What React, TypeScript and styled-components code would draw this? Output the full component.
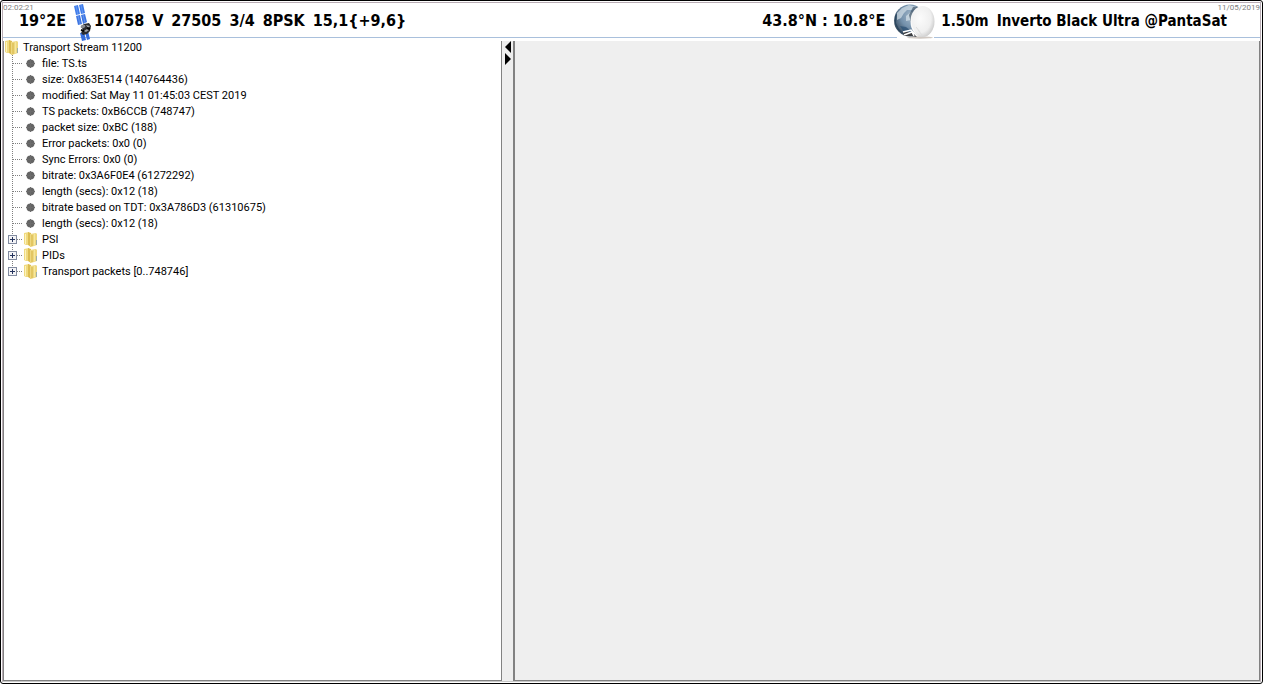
import React from "react";
import styled, { createGlobalStyle } from "styled-components";

const GlobalStyle = createGlobalStyle`
  * { box-sizing: border-box; }
  body { margin: 0; background: #fff; }
  button { font: inherit; padding: 0; border: 0; background: none; }
`;

const Frame = styled.div`
  height: 100vh;
  padding: 1px;
  background: #fff;
  border: 1px solid #000;
  border-radius: 3px;
`;

const Inner = styled.div`
  display: flex;
  flex-direction: column;
  height: 100%;
  border: 1px solid #b9adb5;
  border-bottom-color: #c8c8c8;
`;

const Header = styled.header`
  position: relative;
  display: flex;
  justify-content: space-between;
  align-items: center;
  flex: none;
  height: 35px;
  padding: 0 33px 0 16px;
  border-bottom: 1px solid #a9c0dc;
  color: #000;
  white-space: nowrap;
`;

const HeaderGroup = styled.div`
  display: flex;
  align-items: center;
  gap: 8px;
  height: 35px;
`;

const HeaderText = styled.span<{ $small?: boolean }>`
  padding-top: 2px;
  font: bold ${(p) => (p.$small ? 15 : 16)}px/20px "DejaVu Sans Condensed", "Noto Sans", sans-serif;
`;

const Stamp = styled.time<{ $side: "left" | "right" }>`
  position: absolute;
  top: 0;
  ${(p) => p.$side}: 0;
  color: #808080;
  font: 8px/9px Roboto, "Noto Sans", sans-serif;
`;

const SatelliteSvg = styled.svg`
  position: relative;
  z-index: 1;
  width: 20px;
  height: 38px;
  margin: 2px -6px -4px -2px;
`;

const DishSvg = styled.svg`
  position: relative;
  z-index: 1;
  width: 42px;
  height: 35px;
  margin: 2px -2px 0 0;
`;

const Split = styled.main`
  display: flex;
  flex: 1;
  min-height: 0;
  padding: 3px 0 0;
`;

const TreePane = styled.section`
  flex: 0 0 499px;
  border-right: 1px solid #828282;
  border-bottom: 1px solid #828282;
  border-left: 1px solid #828282;
`;

const Divider = styled.div`
  display: flex;
  flex-direction: column;
  flex: 0 0 11px;
  align-items: flex-end;
  padding-right: 1px;
  background: #eee;
`;

const DividerButton = styled.button`
  display: block;
  width: 7px;
  height: 12px;
  svg { display: block; }
`;

const DetailPane = styled.section`
  flex: 1;
  border: solid #828282;
  border-width: 0 1px 1px 2px;
  background: #efefef;
`;

const Tree = styled.ul`
  margin: 0;
  padding: 0;
  list-style: none;
  color: #000;
  font: 11px/14px Roboto, "Noto Sans", sans-serif;
  white-space: nowrap;
`;

const Row = styled.div`
  display: flex;
  align-items: center;
  height: 16px;
  margin-top: -2px;
  padding-left: 1px;
  gap: 4px;
`;

const Branches = styled.ul`
  margin: 0;
  padding: 0;
  list-style: none;
`;

const Branch = styled.li`
  display: flex;
  align-items: center;
  height: 16px;
`;

const Label = styled.span`
  padding-top: 2px;
`;

const Guide = styled.span`
  position: relative;
  display: flex;
  align-items: center;
  flex: none;
  width: 20px;
  height: 16px;
  svg { display: block; }
`;

const Toggle = styled.button`
  position: absolute;
  top: 4px;
  left: 4px;
  width: 9px;
  height: 9px;
`;

const Marker = styled.span`
  flex: none;
  width: 18px;
  svg { display: block; }
`;

function GuideLines({ last }: { last?: boolean }) {
  return (
    <svg width="20" height="16" shapeRendering="crispEdges" stroke="#808080" strokeDasharray="1 1">
      <line x1="8.5" y1="0" x2="8.5" y2={last ? 9 : 16} />
      <line x1="9" y1="8.5" x2="19" y2="8.5" />
    </svg>
  );
}

function Plus() {
  return (
    <svg width="9" height="9" shapeRendering="crispEdges">
      <rect x="0.5" y="0.5" width="8" height="8" fill="#f4f4f6" stroke="#828ba0" />
      <path d="M2 4.5h5M4.5 2v5" stroke="#25345e" />
    </svg>
  );
}

function Folder() {
  return (
    <svg width="14" height="16" viewBox="0 0 14 16">
      <path d="M0 2l5-1v13l-3 0-2-1z" fill="#f0da80" />
      <path d="M4 1l3 1v14l-3-2z" fill="#dcbc50" />
      <path d="M6 3l6-1 1 1v11l-6 2-1-1z" fill="#eed880" />
      <path d="M1 3h1v10H1z" fill="#fbf3bf" />
      <path d="M7 4h2v11H7z" fill="#e2c662" />
      <path d="M10 3h1v11h-1z" fill="#f6e89c" />
      <path d="M12 9h1v5h-1z" fill="#9fb0a8" />
    </svg>
  );
}

function Dot() {
  return (
    <svg width="14" height="16" viewBox="0 0 14 16">
      <circle cx="6.5" cy="8.5" r="4" fill="#646464" />
      <path d="M2 8h9v1H2zM6 4h1v9H6z" fill="#6c6c6c" />
    </svg>
  );
}

function Satellite() {
  return (
    <SatelliteSvg viewBox="0 0 20 38" aria-hidden="true">
      <path d="M2 2l4-1 2 9-4 1zM7 1l4-1 2 9-4 1z" fill="#3f7bea" />
      <path d="M4 12l4-1 2 9-4 1zM9 11l4-1 2 8-4 2z" fill="#3d75e2" />
      <path d="M4 2l2 9M9 1l2 9M6 12l2 8M11 11l2 8" stroke="#7ea9f4" strokeWidth="0.6" fill="none" />
      <path d="M8 29l4-1 2 8-4 1zM13 28l3-1 2 8-3 1z" fill="#356ddd" />
      <path d="M9 22l3-2 5-1 2 3-1 5-3 3-4 1-2-2 2-3z" fill="#2c2d31" />
      <ellipse cx="11" cy="22.5" rx="2.5" ry="1.6" fill="#8b8d92" transform="rotate(-20 11 22.5)" />
      <path d="M14 21l4 1-2 2zM12 27l3-2 2 1-3 2z" fill="#a3a5aa" />
      <path d="M15 24l3 1M9 26l3 1" stroke="#050505" strokeWidth="2" />
    </SatelliteSvg>
  );
}

function Dish() {
  return (
    <DishSvg viewBox="0 0 42 35" aria-hidden="true">
      <defs>
        <radialGradient id="globe" cx="60%" cy="35%" r="65%">
          <stop offset="0" stopColor="#a8bccd" />
          <stop offset="0.6" stopColor="#7390ab" />
          <stop offset="1" stopColor="#3d5063" />
        </radialGradient>
        <radialGradient id="dish" cx="40%" cy="40%" r="65%">
          <stop offset="0" stopColor="#fbfbfb" />
          <stop offset="0.7" stopColor="#efefef" />
          <stop offset="1" stopColor="#cbcbcb" />
        </radialGradient>
      </defs>
      <path d="M4 30h37v5H4z" fill="#fff" />
      <ellipse cx="27" cy="33.5" rx="13" ry="1.2" fill="#cfc8c2" />
      <circle cx="17" cy="16.5" r="16" fill="url(#globe)" />
      <path d="M4 9l5-5 7-3 8 2-5 3-5 0-3 3-3 5-4 2zM13 12l5-4 3 2-3 6-5 1z" fill="#dce6ec" opacity="0.65" />
      <path d="M2 12l2-3-1 10 3 6 5 5-6-4-3-6z" fill="#24425b" opacity="0.8" />
      <path d="M7 22l6 1 5 4-2 2-5-1z" fill="#284f73" opacity="0.7" />
      <path d="M20 3c6-1 8 1 9 2l-8 5-3 9-2-8z" fill="#2f4357" opacity="0.6" />
      <path d="M10 28l10 0 4 5-6-1-7 0z" fill="#3b3d40" />
      <path d="M10 28l8-2 6 6M11 31l8-3 2 4" stroke="#fff" strokeWidth="1.5" fill="none" />
      <ellipse cx="29.5" cy="17.5" rx="12" ry="15.5" fill="url(#dish)" />
      <path d="M19 11c-2 8 1 16 7 21-7-3-10-13-7-21z" fill="#fff" opacity="0.8" />
      <path d="M25 26l4 5m-6-8l4 5" stroke="#dedede" strokeWidth="1" />
    </DishSvg>
  );
}

const signal = ["10758", "V", "27505", "3/4", "8PSK", "15,1{+9,6}"];

const details = [
  "file: TS.ts",
  "size: 0x863E514 (140764436)",
  "modified: Sat May 11 01:45:03 CEST 2019",
  "TS packets: 0xB6CCB (748747)",
  "packet size: 0xBC (188)",
  "Error packets: 0x0 (0)",
  "Sync Errors: 0x0 (0)",
  "bitrate: 0x3A6F0E4 (61272292)",
  "length (secs): 0x12 (18)",
  "bitrate based on TDT: 0x3A786D3 (61310675)",
  "length (secs): 0x12 (18)",
];

const folders = ["PSI", "PIDs", "Transport packets [0..748746]"];

export default function App() {
  return (
    <>
      <GlobalStyle />
      <Frame>
        <Inner>
          <Header>
            <Stamp $side="left">02:02:21</Stamp>
            <HeaderGroup>
              <HeaderText>19°2E</HeaderText>
              <Satellite />
              {signal.map((s) => (
                <HeaderText key={s}>{s}</HeaderText>
              ))}
            </HeaderGroup>
            <HeaderGroup>
              <HeaderText>43.8°N : 10.8°E</HeaderText>
              <Dish />
              <HeaderText $small>1.50m</HeaderText>
              <HeaderText $small>Inverto Black Ultra @PantaSat</HeaderText>
            </HeaderGroup>
            <Stamp $side="right">11/05/2019</Stamp>
          </Header>
          <Split>
            <TreePane>
              <Tree>
                <li>
                  <Row>
                    <Folder />
                    <Label>Transport Stream 11200</Label>
                  </Row>
                  <Branches>
                    {details.map((text, i) => (
                      <Branch key={i}>
                        <Guide><GuideLines /></Guide>
                        <Marker><Dot /></Marker>
                        <Label>{text}</Label>
                      </Branch>
                    ))}
                    {folders.map((text, i) => (
                      <Branch key={text}>
                        <Guide>
                          <GuideLines last={i === folders.length - 1} />
                          <Toggle type="button" aria-label={`Expand ${text}`}><Plus /></Toggle>
                        </Guide>
                        <Marker><Folder /></Marker>
                        <Label>{text}</Label>
                      </Branch>
                    ))}
                  </Branches>
                </li>
              </Tree>
            </TreePane>
            <Divider>
              <DividerButton type="button" aria-label="Collapse left pane">
                <svg width="7" height="12"><path d="M6 0v12L0 6z" /></svg>
              </DividerButton>
              <DividerButton type="button" aria-label="Collapse right pane">
                <svg width="7" height="12"><path d="M0 0v12l6-6z" /></svg>
              </DividerButton>
            </Divider>
            <DetailPane aria-label="Details" />
          </Split>
        </Inner>
      </Frame>
    </>
  );
}
